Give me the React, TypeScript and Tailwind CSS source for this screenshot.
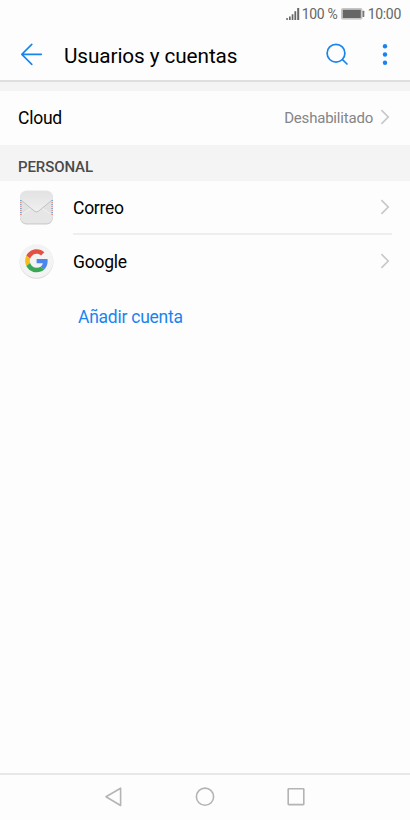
import type { ReactNode } from 'react'

function Chevron() {
  return (
    <svg width="10" height="16" viewBox="0 0 10 16" fill="none" className="shrink-0">
      <path d="M1.400 1.200 8.200 8 1.400 14.800" stroke="#c8c8c8" strokeWidth="1.700" />
    </svg>
  )
}

function MailIcon() {
  return (
    <svg width="36" height="36" viewBox="0 0 36 36" fill="none">
      <defs>
        <linearGradient id="mail" x1="0" y1="0" x2="0" y2="1">
          <stop offset="0" stopColor="#e6e6e6" />
          <stop offset="1" stopColor="#dedede" />
        </linearGradient>
        <linearGradient id="flap" x1="0" y1="0" x2="0" y2="1">
          <stop offset="0" stopColor="#e2e2e2" />
          <stop offset="1" stopColor="#f0f0f0" />
        </linearGradient>
      </defs>
      <rect x="2" y="2.500" width="33" height="33" rx="6.500" fill="#cbcbcb" />
      <rect x="2" y="1.500" width="33" height="33" rx="6.500" fill="url(#mail)" />
      <path d="M3 25.500 13 18.500h11l10 7V28c0 4-2 6-6 6H9c-4 0-6-2-6-6z" fill="#e6e6e6" />
      <path d="M3.500 25.500 14 18.500M33.500 25.500 23 18.500" stroke="#f5f5f5" strokeWidth=".8" />
      <path d="M3 11 16.500 21.800q2 1.500 4 0L34 11V8.500c0-4-2-6-6-6H9c-4 0-6 2-6 6z" fill="url(#flap)" />
      <path d="M4 12 16.500 22.200q2 1.500 4 0L33 12" stroke="#bcbcbc" strokeWidth=".9" />
      <path d="M2.900 11v16M34.100 11v16" stroke="#f1f1f1" strokeWidth="1.800" />
      <path d="M2.900 11v16M34.100 11v16" stroke="#5f9dcc" strokeWidth="1.500" strokeDasharray="1.300 2.700" />
      <path d="M2.900 13v14M34.100 13v14" stroke="#e58080" strokeWidth="1.500" strokeDasharray="1.300 2.700" />
    </svg>
  )
}

function GoogleIcon() {
  return (
    <svg width="36" height="36" viewBox="0 0 36 36">
      <circle cx="18.500" cy="18.900" r="16.900" fill="#d9d9d9" />
      <circle cx="18.500" cy="18" r="16.800" fill="#f3f3f3" />
      <g transform="translate(7.100 6.300) scale(.48)">
        <path fill="#e25141" d="M24 0c6.470 0 11.900 2.380 16.060 6.250l-6.850 6.850C30.710 10.720 27.540 9.500 24 9.500c-6.260 0-11.570 4.220-13.460 9.910l-7.980-6.190C6.510 5.380 14.620 0 24 0z" />
        <path fill="#4a86ee" d="M46.980 24.550c0-1.570-.15-3.090-.38-4.550H24v9.020h12.940c-.58 2.960-2.260 5.480-4.780 7.180l7.730 6c4.510-4.180 7.090-10.360 7.090-17.650z" />
        <path fill="#f6bc1a" d="M10.530 28.590c-.48-1.450-.76-2.990-.76-4.590s.27-3.140.76-4.590l-7.980-6.190C.92 16.460 0 20.120 0 24c0 3.880.92 7.540 2.560 10.780l7.970-6.190z" />
        <path fill="#3aa757" d="M24 48c6.480 0 11.930-2.130 15.890-5.810l-7.730-6c-2.150 1.450-4.920 2.300-8.160 2.300-6.260 0-11.570-4.220-13.470-9.910l-7.980 6.190C6.510 42.620 14.620 48 24 48z" />
      </g>
    </svg>
  )
}

function StatusBar() {
  return (
    <div className="flex h-7 items-center justify-end pr-[9px] text-sm text-[#666]">
      <svg width="14" height="14" viewBox="0 0 14 14" fill="#666" className="mr-[2px]">
        <path d="M.300 11h1.500v2H.300zM3 9.500h1.700V13H3zM5.700 7.200h1.700V13H5.700zM8.400 4.200h1.800V13H8.400zM11.200 1h2v12h-2z" />
      </svg>
      <span className="w-[37px] tracking-[-0.3px] whitespace-nowrap">100 %</span>
      <svg width="24" height="12" viewBox="0 0 24 12" className="mr-[3px] ml-[2px]">
        <rect x=".600" y=".600" width="20.300" height="10.500" rx=".8" fill="#ccc" stroke="#c2c2c2" />
        <rect x="1.800" y="1.800" width="18" height="8.200" fill="#666" />
        <rect x="21.500" y="2.800" width="1.800" height="6.200" rx=".5" fill="#777" />
      </svg>
      <span className="tracking-[-0.3px]">10:00</span>
    </div>
  )
}

function Header() {
  return (
    <header className="flex h-[54px] items-center border-b-2 border-[#dfdfdf] pr-[18px] pl-[20px]">
      <svg width="24" height="24" viewBox="0 0 24 24" fill="none" stroke="#1a84ee" strokeWidth="1.600" strokeLinecap="round" strokeLinejoin="round">
        <path d="M11.800 2.400 1.800 12.400 11.800 22.400M1.800 12.400H21.300" />
      </svg>
      <h1 className="ml-[20px] flex-1 pt-[4px] text-[20.75px] leading-6 tracking-[-0.1px] whitespace-nowrap text-black">Usuarios y cuentas</h1>
      <svg width="24" height="24" viewBox="0 0 24 24" fill="none" stroke="#1a84ee" strokeWidth="1.700">
        <circle cx="11" cy="11.200" r="8.900" />
        <path d="m17.200 17.400 5.300 5.100" />
      </svg>
      <svg width="14" height="24" viewBox="0 0 14 24" fill="#1a84ee" className="ml-[29px]">
        <circle cx="7" cy="4.300" r="2.200" />
        <circle cx="7" cy="12.500" r="2.200" />
        <circle cx="7" cy="20.700" r="2.200" />
      </svg>
    </header>
  )
}

function AccountRow({ icon, name }: { icon: ReactNode; name: string }) {
  return (
    <div className="flex h-[52px] items-center pr-[20px] pl-[18px]">
      {icon}
      <span className="ml-[19px] flex-1 pt-[2px]">{name}</span>
      <Chevron />
    </div>
  )
}

function NavBar() {
  return (
    <nav className="flex h-[47px] items-center justify-center gap-[71px] border-t-2 border-[#e8e8e8] pb-[2px]">
      <svg width="20" height="20" viewBox="0 0 20 20" fill="none" stroke="#b4b4b4" strokeWidth="1.600" strokeLinejoin="round">
        <path d="M16.600 1.200V18.500L2 9.800z" />
      </svg>
      <svg width="20" height="20" viewBox="0 0 20 20" fill="none" stroke="#b4b4b4" strokeWidth="1.600">
        <circle cx="10" cy="9.700" r="8.600" />
      </svg>
      <svg width="20" height="20" viewBox="0 0 20 20" fill="none" stroke="#b4b4b4" strokeWidth="1.600">
        <rect x="2.200" y="1.800" width="15.600" height="15.800" rx=".5" />
      </svg>
    </nav>
  )
}

export default function App() {
  return (
    <div className="flex h-[820px] w-[410px] flex-col bg-[#fdfdfd] font-['Roboto',sans-serif] text-[17.5px] leading-6 tracking-[-0.25px] text-black">
      <StatusBar />
      <Header />
      <div className="h-[9px] bg-[#f4f4f4]" />

      <main className="flex-1">
        <div className="flex h-[54px] items-center pr-[20px] pb-[2px] pl-[18px]">
          <span className="flex-1 pt-[2px]">Cloud</span>
          <span className="mr-[7px] pt-px text-[15px] tracking-[-0.2px] text-[#858585]">Deshabilitado</span>
          <Chevron />
        </div>

        <div className="flex h-9 items-center bg-[#f4f4f4] pt-[7px] pl-[18px] text-[15px] font-medium tracking-[-0.1px] text-[#4a4a4a]">PERSONAL</div>

        <AccountRow icon={<MailIcon />} name="Correo" />
        <div className="mr-[18px] ml-[73px] h-[2px] bg-[#eee]" />
        <AccountRow icon={<GoogleIcon />} name="Google" />

        <button className="mt-[18px] ml-[78px] block text-[#1a84ee]">Añadir cuenta</button>
      </main>

      <NavBar />
    </div>
  )
}
